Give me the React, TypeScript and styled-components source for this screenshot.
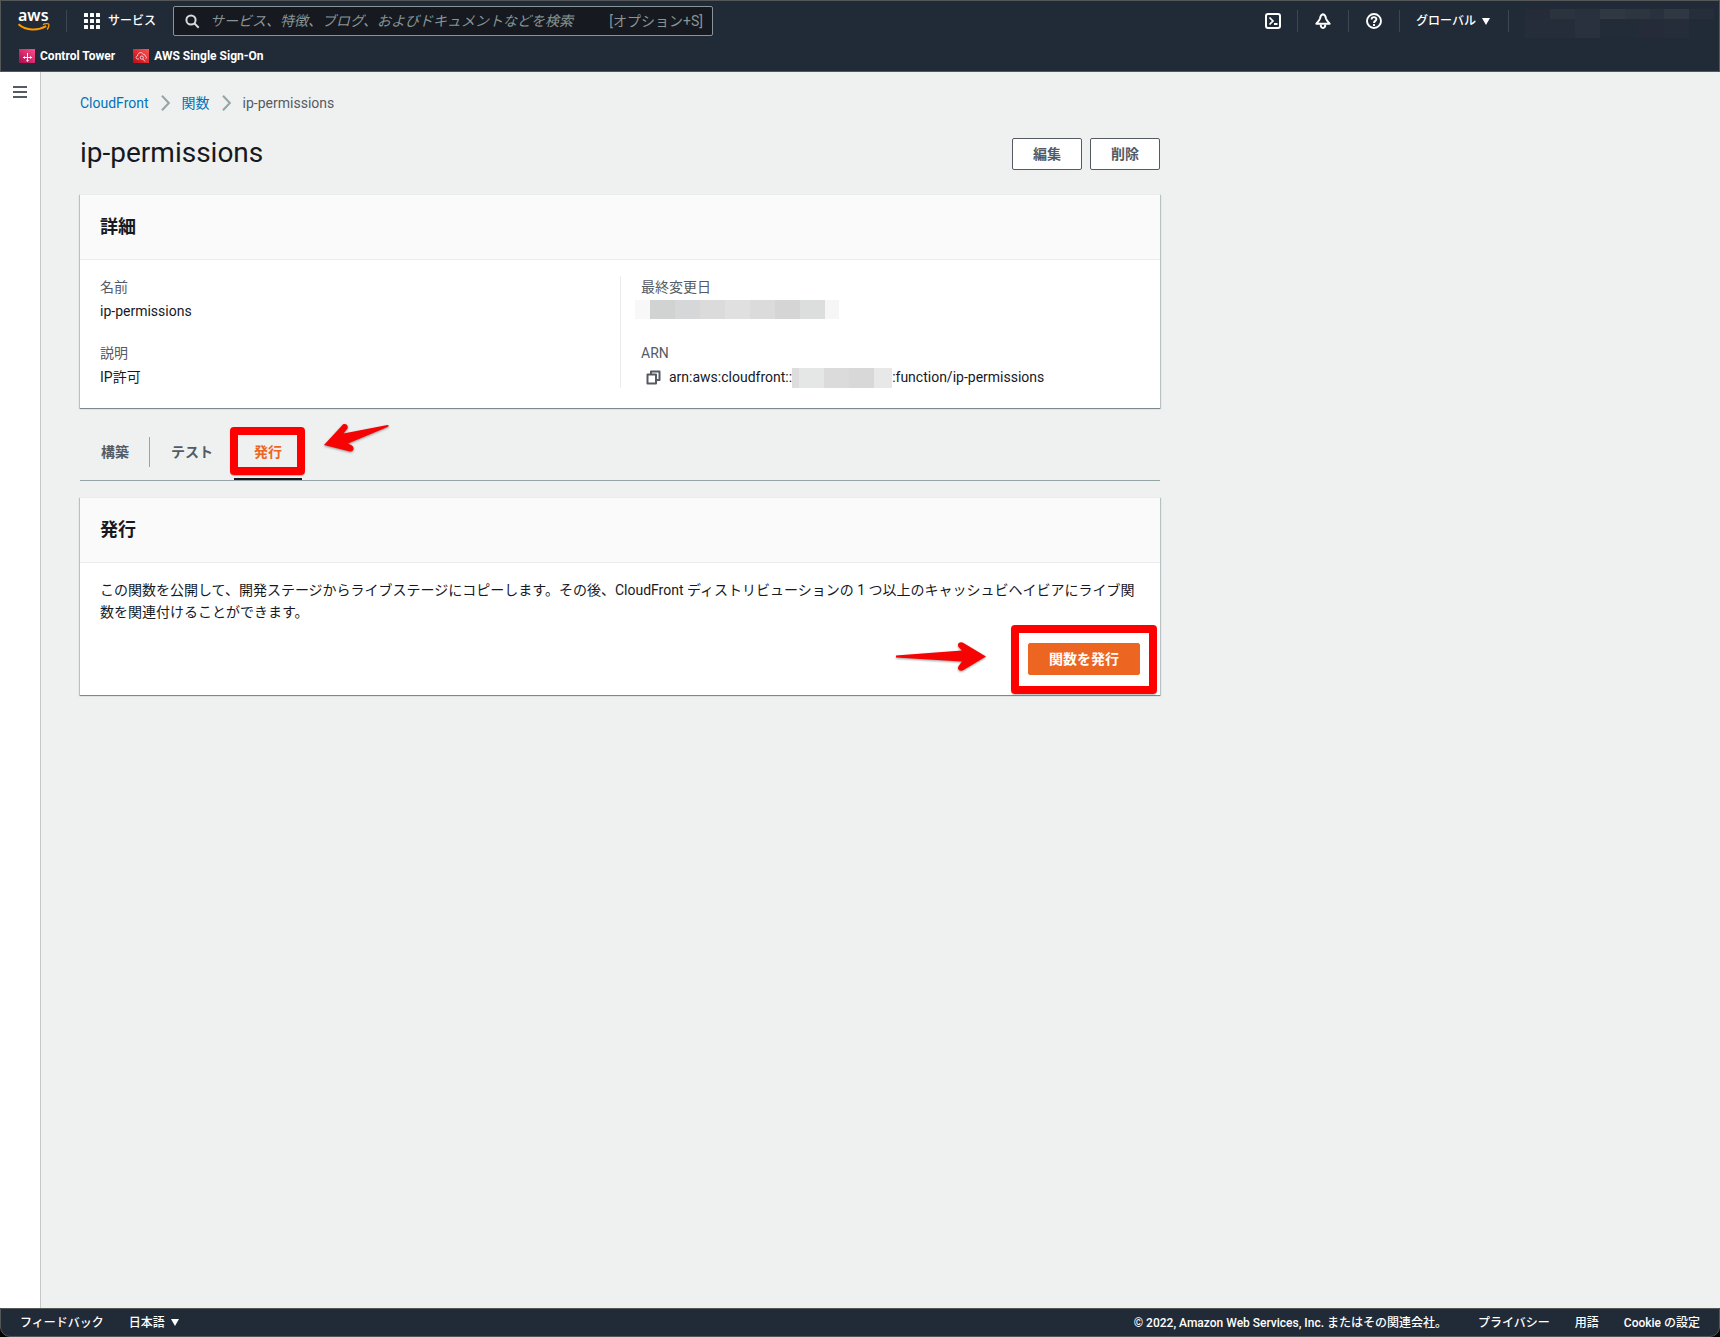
import React from "react";
import styled, { createGlobalStyle, css } from "styled-components";

const color = {
  bar: "#212b37",
  barEdge: "#545658",
  ink: "#16191f",
  muted: "#545b64",
  link: "#0073bb",
  line: "#eaeded",
  rule: "#95a5a6",
  orange: "#ec6622",
  red: "#ff0000",
};

const GlobalStyle = createGlobalStyle`
  *, *::before, *::after { box-sizing: border-box; }
  body {
    margin: 0;
    background: #000;
    color: ${color.ink};
    font: 14px/22px Roboto, "Noto Sans CJK JP", sans-serif;
  }
  button, input { font: inherit; }
  button { cursor: pointer; }
  a { color: inherit; text-decoration: none; }
  svg { display: block; flex: none; }
`;

const Shell = styled.div`
  display: flex;
  flex-direction: column;
  min-height: 100vh;
`;

const Header = styled.header`
  display: flex;
  flex-direction: column;
  height: 72px;
  background: ${color.bar};
  border: 1px solid ${color.barEdge};
  color: #fff;
  font-size: 12px;
`;

const TopRow = styled.div`
  display: flex;
  align-items: center;
  height: 40px;
  padding: 0 5px 0 17px;
`;

const Separator = styled.span`
  flex: none;
  width: 1px;
  height: 22px;
  background: #3c4650;
`;

const BarButton = styled.button<{ $pad?: number }>`
  display: flex;
  align-items: center;
  gap: 8px;
  padding: 0 ${(p) => p.$pad ?? 16}px;
  border: 0;
  background: none;
  color: #fff;
  font-weight: 500;
  line-height: 20px;
  white-space: nowrap;
`;

const MenuTrigger = styled(BarButton)`
  gap: 6px;
`;

const RegionTrigger = styled(MenuTrigger)`
  padding: 0 18px 0 16px;
`;

const LogoLink = styled.a`
  margin-right: 16px;
`;

const SearchBox = styled.label`
  display: flex;
  align-items: center;
  flex: 0 1 540px;
  min-width: 200px;
  height: 30px;
  gap: 10px;
  padding: 0 9px 0 11px;
  border: 1px solid #879596;
  border-radius: 2px;
  background: #16191f;
  color: #879596;
  font-size: 14px;
`;

const SearchInput = styled.input`
  flex: 1;
  min-width: 0;
  padding: 0;
  border: 0;
  outline: 0;
  background: none;
  color: #fff;
  &::placeholder {
    color: #879596;
    font-style: italic;
    opacity: 1;
  }
`;

const Shortcut = styled.span`
  white-space: nowrap;
`;

const Tools = styled.div`
  display: flex;
  align-items: center;
  margin-left: auto;
`;

const Account = styled.button`
  display: flex;
  flex-direction: column;
  margin-left: 16px;
  padding: 4px 0 0;
  border: 0;
  background: none;
`;

const Mosaic = styled.span`
  display: inline-flex;
  flex: none;
`;

const DateMosaic = styled(Mosaic)`
  margin-left: -6px;
`;

const ArnMosaic = styled(Mosaic)`
  align-self: flex-end;
`;

const Tile = styled.span<{ $w: number; $h: number; $c: string }>`
  width: ${(p) => p.$w}px;
  height: ${(p) => p.$h}px;
  background: ${(p) => p.$c};
`;

const Favorites = styled.nav`
  display: flex;
  align-items: center;
  gap: 18px;
  height: 30px;
  padding: 0 18px;
`;

const Favorite = styled.a`
  display: flex;
  align-items: center;
  gap: 5px;
  font-weight: 700;
  white-space: nowrap;
`;

const Body = styled.div`
  display: flex;
  flex: 1;
  background: #eff1f0;
`;

const SideRail = styled.aside`
  flex: none;
  width: 41px;
  padding: 14px 13px;
  background: #fff;
  border-right: 1px solid #c3c9c9;
`;

const MenuButton = styled.button`
  display: block;
  padding: 0;
  border: 0;
  background: none;
`;

const Main = styled.main`
  flex: 1;
  max-width: 1158px;
  padding: 20px 39px;
`;

const Crumbs = styled.nav`
  display: flex;
  align-items: center;
  gap: 12px;
  color: ${color.muted};
  a { color: ${color.link}; }
`;

const TitleRow = styled.div`
  display: flex;
  align-items: flex-start;
  justify-content: space-between;
  margin: 24px 0;
`;

const Title = styled.h1`
  margin: 0;
  font-size: 28px;
  font-weight: 400;
  line-height: 30px;
`;

const Actions = styled.div`
  display: flex;
  gap: 8px;
`;

const Button = styled.button<{ $primary?: boolean }>`
  height: 32px;
  padding: 0 20px;
  border: 1px solid ${color.muted};
  border-radius: 2px;
  background: #fff;
  color: ${color.muted};
  font-weight: 700;
  line-height: 22px;
  ${(p) =>
    p.$primary &&
    css`
      border-color: ${color.orange};
      background: ${color.orange};
      color: #fff;
    `}
`;

const Card = styled.section`
  background: #fff;
  border-top: 1px solid ${color.line};
  box-shadow: 0 1px 0 0 #7c898c, 1px 1px 1px 0 #b9c2c3, -1px 1px 1px 0 #b9c2c3;
`;

const CardHeader = styled.header`
  padding: 20px;
  background: #fafafa;
  border-bottom: 1px solid ${color.line};
`;

const CardTitle = styled.h2`
  margin: 0;
  font-size: 18px;
  font-weight: 700;
  line-height: 24px;
`;

const Columns = styled.div`
  display: grid;
  grid-template-columns: 1fr 1fr;
  padding: 16px 0 20px;
`;

const Column = styled.dl`
  display: flex;
  flex-direction: column;
  gap: 20px;
  margin: 0;
  padding: 0 20px;
  & + & { border-left: 1px solid ${color.line}; }
`;

const Field = styled.div`
  display: flex;
  flex-direction: column;
  gap: 2px;
`;

const Label = styled.dt`
  color: ${color.muted};
`;

const Value = styled.dd`
  display: flex;
  height: 22px;
  margin: 0;
`;

const Arn = styled(Value)`
  align-items: center;
`;

const CopyButton = styled.button`
  padding: 0 8px 0 5px;
  border: 0;
  background: none;
`;

const Tabs = styled.div`
  display: flex;
  align-items: center;
  margin: 16px 0;
  padding-left: 1px;
  border-bottom: 1px solid ${color.rule};
`;

const Tab = styled.button<{ $active?: boolean }>`
  position: relative;
  height: 56px;
  padding: 0 20px;
  border: 0;
  border-bottom: 2px solid ${(p) => (p.$active ? color.ink : "transparent")};
  border-top: 2px solid transparent;
  background: none;
  color: ${(p) => (p.$active ? color.orange : color.muted)};
  font-weight: 700;
`;

const TabRule = styled.span`
  width: 1px;
  height: 30px;
  margin-right: 1px;
  background: ${color.rule};
`;

const TabGap = styled.span`
  width: 1px;
`;

const PublishBody = styled.div`
  display: flex;
  flex-direction: column;
  gap: 20px;
  padding: 16px 20px 20px;
`;

const Text = styled.p`
  margin: 0;
`;

const PublishAction = styled.div`
  position: relative;
  align-self: flex-end;
`;

/* Red callouts laid over the controls they point at. */
const Callout = styled.span`
  position: absolute;
  border: 8px solid ${color.red};
  border-radius: 4px;
  box-shadow: 0 1px 1px rgba(0, 0, 0, 0.25);
  pointer-events: none;
`;

const TabCallout = styled(Callout)`
  inset: 1px -3px 3px -4px;
`;

const ButtonCallout = styled(Callout)`
  inset: -18px -17px -19px;
`;

const Arrow = styled.svg`
  position: absolute;
  filter: drop-shadow(0 1px 1px rgba(0, 0, 0, 0.4));
`;

const TabArrow = styled(Arrow)`
  left: 89px;
  top: -3px;
`;

const ButtonArrow = styled(Arrow)`
  right: 153px;
  top: -2px;
`;

const Footer = styled.footer`
  display: flex;
  align-items: center;
  height: 29px;
  padding: 0 19px;
  gap: 25px;
  background: ${color.bar};
  border: 1px solid ${color.barEdge};
  border-radius: 0 0 10px 10px;
  color: #fff;
  font-size: 12px;
  font-weight: 500;
  white-space: nowrap;
`;

const Copyright = styled.span`
  margin-left: auto;
  margin-right: 6px;
`;

const LogoSvg = styled.svg`
  overflow: visible;
  font: 600 16px/22px "Noto Sans", sans-serif;
`;

const AwsLogo = () => (
  <LogoSvg width="32" height="22" viewBox="0 0 32 22">
    <text x="0" y="11" fill="#fff">aws</text>
    <path d="M.5 14.2C8 20.8 20 21 28.2 16.2" fill="none" stroke="#f90" strokeWidth="2" />
    <path d="M25 14.6c2-1.2 5.4-1 5.8-.4.4.7-.2 3.800-1.700 5.200" fill="none" stroke="#f90" strokeWidth="1.300" />
  </LogoSvg>
);

const GridIcon = () => (
  <svg width="16" height="16" viewBox="0 0 16 16" fill="#fff">
    {[0, 6, 12].map((y) =>
      [0, 6, 12].map((x) => <rect key={`${x}-${y}`} x={x} y={y} width="4" height="4" rx=".5" />)
    )}
  </svg>
);

const SearchIcon = () => (
  <svg width="15" height="15" viewBox="0 0 15 15" fill="none" stroke="#d5dbdb" strokeWidth="2">
    <circle cx="6" cy="6" r="4.600" />
    <path d="M9.300 9.300 13.700 13.700" />
  </svg>
);

const ShellIcon = () => (
  <svg width="16" height="16" viewBox="0 0 16 16" fill="none" stroke="#fff" strokeWidth="2">
    <rect x="1" y="1" width="14" height="14" rx="2" />
    <path d="M4.500 4.500 8 8 4.500 11.500" strokeWidth="1.700" />
    <path d="M9 11h3.500" />
  </svg>
);

const BellIcon = () => (
  <svg width="16" height="16" viewBox="0 0 16 16" fill="none" stroke="#fff" strokeWidth="1.900">
    <path d="M8 1.200C6 1.400 5.400 3 5 5.500 4.500 7.500 3 8.500 1.300 10.800h13.400C13 8.500 11.500 7.500 11 5.500 10.600 3 10 1.400 8 1.200Z" strokeLinejoin="round" />
    <path d="M5.700 11.500c0 4.600 4.600 4.600 4.600 0" />
  </svg>
);

const HelpIcon = () => (
  <svg width="16" height="16" viewBox="0 0 16 16" fill="none" stroke="#fff" strokeWidth="1.900">
    <circle cx="8" cy="8" r="7" />
    <path d="M5.600 6.500C5.600 3.300 10.500 3.500 10.400 6.300 10.400 8 8 7.800 8 10" />
    <path d="M8 11v1.900" />
  </svg>
);

const Caret = () => (
  <svg width="8" height="7" viewBox="0 0 8 7" fill="#fff">
    <path d="M0 0h8L4 7Z" />
  </svg>
);

const ControlTowerIcon = () => (
  <svg width="16" height="14" viewBox="0 0 16 14">
    <defs>
      <linearGradient id="tower" x1="0" y1="1" x2="1" y2="0">
        <stop offset="0" stopColor="#b0084d" />
        <stop offset="1" stopColor="#ff4f8b" />
      </linearGradient>
    </defs>
    <rect width="16" height="14" fill="url(#tower)" />
    <path d="M4 8.500h9M8.500 4v8.500" fill="none" stroke="#fff" />
    <path d="M5.500 7.200v2.600M11.500 7.200v2.600M7.200 11l1.300 1.300L9.800 11" fill="none" stroke="#fff" strokeWidth=".8" />
  </svg>
);

const SsoIcon = () => (
  <svg width="16" height="14" viewBox="0 0 16 14">
    <defs>
      <linearGradient id="sso" x1="0" y1="1" x2="1" y2="0">
        <stop offset="0" stopColor="#bd0816" />
        <stop offset="1" stopColor="#ff5252" />
      </linearGradient>
    </defs>
    <rect width="16" height="14" fill="url(#sso)" />
    <g fill="none" stroke="#fff" strokeWidth=".7">
      <path d="M6 10H4.500C2.500 9.800 2.600 7.200 4.500 7 4.500 3 9.500 2.500 10.300 5.500c1.200-.6 1.800.2 1.800 1.500 1.600.2 1.800 2.300.4 2.900" />
      <circle cx="8.800" cy="8.600" r="1.600" />
      <path d="M10 10l2 2.500" />
    </g>
  </svg>
);

const MenuIcon = () => (
  <svg width="14" height="12" viewBox="0 0 14 12" fill={color.muted}>
    <path d="M0 0h14v2H0zM0 5h14v2H0zM0 10h14v2H0z" />
  </svg>
);

const Chevron = () => (
  <svg width="9" height="16" viewBox="0 0 9 16" fill="none" stroke="#95a5a6" strokeWidth="2">
    <path d="M1 .7 7.800 8 1 15.300" />
  </svg>
);

const CopyIcon = () => (
  <svg width="15" height="15" viewBox="0 0 15 15" fill="none" stroke={color.muted} strokeWidth="2" strokeLinejoin="round">
    <path d="M1.500 4.500h8.500v9H1.500z" />
    <path d="M5 4.500V1.500h8.500V10h-3" />
  </svg>
);

const DATE_TILES: [number, string][] = [
  [15, "#f8f8f8"], [25, "#d1d2d2"], [25, "#d6d7d9"], [25, "#dbdbdc"], [25, "#e0e0e0"],
  [25, "#dbdbdb"], [25, "#d5d5d5"], [25, "#dcdede"], [14, "#f6f6f6"],
];
const ARN_TILES: [number, string][] = [
  [7, "#dddddd"], [25, "#e5e7e7"], [25, "#dbdbdb"], [25, "#d8d8d8"], [18, "#e8e8e8"],
];
const ACCOUNT_ROWS: { h: number; tiles: [number, string][] }[] = [
  { h: 10, tiles: [[25, "#252b38"], [25, "#2b333f"], [25, "#29313e"], [25, "#303844"], [25, "#2d3541"], [14, "#29313e"], [25, "#303844"], [25, "#252e3a"]] },
  { h: 19, tiles: [[50, "#242d39"], [25, "#28313d"], [39, "#222c38"], [25, "#262b39"], [25, "#242d39"]] },
];

const renderTiles = (tiles: [number, string][], h: number) =>
  tiles.map(([w, c], i) => <Tile key={i} $w={w} $h={h} $c={c} />);

export default function App() {
  return (
    <>
      <GlobalStyle />
      <Shell>
        <Header>
          <TopRow>
            <LogoLink href="#" aria-label="AWS"><AwsLogo /></LogoLink>
            <Separator />
            <BarButton $pad={17}><GridIcon />サービス</BarButton>
            <SearchBox>
              <SearchIcon />
              <SearchInput aria-label="検索" placeholder="サービス、特徴、ブログ、およびドキュメントなどを検索" />
              <Shortcut>[オプション+S]</Shortcut>
            </SearchBox>
            <Tools>
              <BarButton aria-label="CloudShell"><ShellIcon /></BarButton>
              <Separator />
              <BarButton $pad={17} aria-label="通知"><BellIcon /></BarButton>
              <Separator />
              <BarButton $pad={17} aria-label="ヘルプ"><HelpIcon /></BarButton>
              <Separator />
              <RegionTrigger>グローバル<Caret /></RegionTrigger>
              <Separator />
              <Account aria-label="アカウント">
                {ACCOUNT_ROWS.map((row, i) => (
                  <Mosaic key={i}>{renderTiles(row.tiles, row.h)}</Mosaic>
                ))}
              </Account>
            </Tools>
          </TopRow>
          <Favorites>
            <Favorite href="#"><ControlTowerIcon />Control Tower</Favorite>
            <Favorite href="#"><SsoIcon />AWS Single Sign-On</Favorite>
          </Favorites>
        </Header>

        <Body>
          <SideRail>
            <MenuButton aria-label="メニュー"><MenuIcon /></MenuButton>
          </SideRail>
          <Main>
            <Crumbs>
              <a href="#">CloudFront</a>
              <Chevron />
              <a href="#">関数</a>
              <Chevron />
              <span>ip-permissions</span>
            </Crumbs>

            <TitleRow>
              <Title>ip-permissions</Title>
              <Actions>
                <Button>編集</Button>
                <Button>削除</Button>
              </Actions>
            </TitleRow>

            <Card>
              <CardHeader><CardTitle>詳細</CardTitle></CardHeader>
              <Columns>
                <Column>
                  <Field><Label>名前</Label><Value>ip-permissions</Value></Field>
                  <Field><Label>説明</Label><Value>IP許可</Value></Field>
                </Column>
                <Column>
                  <Field>
                    <Label>最終変更日</Label>
                    <Value><DateMosaic>{renderTiles(DATE_TILES, 19)}</DateMosaic></Value>
                  </Field>
                  <Field>
                    <Label>ARN</Label>
                    <Arn>
                      <CopyButton aria-label="コピー"><CopyIcon /></CopyButton>
                      <span>arn:aws:cloudfront::</span>
                      <ArnMosaic>{renderTiles(ARN_TILES, 20)}</ArnMosaic>
                      <span>:function/ip-permissions</span>
                    </Arn>
                  </Field>
                </Column>
              </Columns>
            </Card>

            <Tabs role="tablist">
              <Tab role="tab">構築</Tab>
              <TabRule />
              <Tab role="tab">テスト</Tab>
              <TabGap />
              <Tab role="tab" aria-selected $active>
                発行
                <TabCallout />
                <TabArrow width="68" height="32" viewBox="0 0 68 32">
                  <path
                    d="M1 22 19 2.500C21-.5 26 1.500 24.500 5.500L20.500 10.500 64.500 2C66 2 66 3.500 64.500 4L25 20.500 29 22.500C32 25 30.500 29 27 28.500Z"
                    fill="#f60404"
                  />
                </TabArrow>
              </Tab>
            </Tabs>

            <Card>
              <CardHeader><CardTitle>発行</CardTitle></CardHeader>
              <PublishBody>
                <Text>
                  この関数を公開して、開発ステージからライブステージにコピーします。その後、CloudFront ディストリビューションの 1 つ以上のキャッシュビヘイビアにライブ関数を関連付けることができます。
                </Text>
                <PublishAction>
                  <Button $primary>関数を発行</Button>
                  <ButtonCallout />
                  <ButtonArrow width="92" height="32" viewBox="0 0 92 32">
                    <path
                      d="M1 14.500 67 9.500 64 6.500C61 3 65 0 68.500 2L91 15.500 68.500 29C65 31 61 28 64 24.500L67 20.500 1 16.500Z"
                      fill="#f60404"
                    />
                  </ButtonArrow>
                </PublishAction>
              </PublishBody>
            </Card>
          </Main>
        </Body>

        <Footer>
          <a href="#">フィードバック</a>
          <MenuTrigger $pad={0}>日本語<Caret /></MenuTrigger>
          <Copyright>© 2022, Amazon Web Services, Inc. またはその関連会社。</Copyright>
          <a href="#">プライバシー</a>
          <a href="#">用語</a>
          <a href="#">Cookie の設定</a>
        </Footer>
      </Shell>
    </>
  );
}
